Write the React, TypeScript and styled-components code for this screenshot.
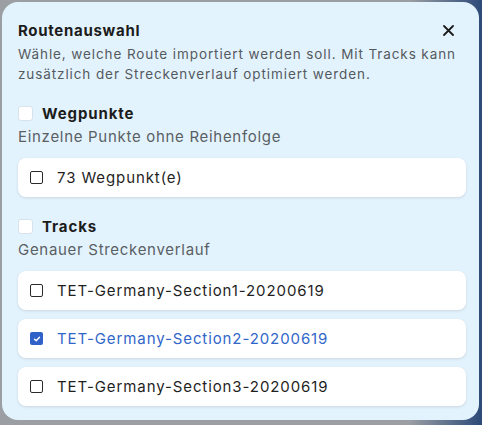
import React, { useState } from 'react';
import styled, { createGlobalStyle } from 'styled-components';

const GlobalStyle = createGlobalStyle`
  html, body {
    margin: 0;
    padding: 0;
    background: #9b9ea3;
    font-family: Inter, "Noto Sans", sans-serif;
  }
`;

const Backdrop = styled.div`
  width: 482px;
  height: 425px;
  box-sizing: border-box;
  padding: 2px 3px 5px 2px;
  background: linear-gradient(90deg, #9b9ea3 0%, #9b9ea3 85%, #2c4a78 100%);
`;

const Dialog = styled.div`
  height: 100%;
  box-sizing: border-box;
  background: #e3f3fd;
  border-radius: 16px;
  padding: 16px 13px 12px 16px;
  display: flex;
  flex-direction: column;
`;

const Header = styled.div`
  display: flex;
  align-items: center;
  justify-content: space-between;
  height: 24px;
`;

const Title = styled.h2`
  margin: 0;
  font-size: 15px;
  font-weight: 700;
  letter-spacing: 0.7px;
  color: #1c1c1c;
`;

const CloseButton = styled.button`
  border: none;
  background: none;
  padding: 0;
  width: 24px;
  height: 24px;
  display: flex;
  align-items: center;
  justify-content: center;
  margin-right: 6px;
  cursor: pointer;
`;

const Description = styled.p`
  margin: 2px 0 0 0;
  font-size: 13.5px;
  letter-spacing: 0.9px;
  line-height: 20px;
  color: #555a5f;
`;

const Section = styled.div`
  margin-top: 20px;
  display: flex;
  flex-direction: column;
`;

const SectionHead = styled.label`
  display: flex;
  align-items: center;
  gap: 9px;
  height: 18px;
  font-size: 15px;
  font-weight: 700;
  letter-spacing: 0.9px;
  color: #1c1c1c;
`;

const BigBox = styled.span`
  width: 15px;
  height: 15px;
  box-sizing: border-box;
  background: #fff;
  border: 1px solid #d8e2ea;
  border-radius: 3px;
`;

const SectionHint = styled.div`
  margin-top: 5px;
  font-size: 15px;
  letter-spacing: 0.7px;
  line-height: 20px;
  color: #5a5f64;
`;

const List = styled.div`
  margin-top: 11px;
  display: flex;
  flex-direction: column;
  gap: 9px;
`;

const Card = styled.div<{ $active?: boolean }>`
  height: 39px;
  box-sizing: border-box;
  background: #fff;
  border-radius: 8px;
  box-shadow: 0 1px 3px rgba(0, 0, 0, 0.12);
  display: flex;
  align-items: center;
  gap: 14px;
  padding-left: 12px;
  font-size: 15px;
  letter-spacing: 0.9px;
  color: ${(p) => (p.$active ? '#3166c9' : '#1f1f1f')};
  cursor: pointer;
`;

const SmallBox = styled.span<{ $checked?: boolean }>`
  width: 13px;
  height: 13px;
  box-sizing: border-box;
  border-radius: 2px;
  border: ${(p) => (p.$checked ? 'none' : '1.5px solid #2a2a2a')};
  background: ${(p) => (p.$checked ? '#2f61c8' : '#fff')};
  display: flex;
  align-items: center;
  justify-content: center;
`;

const tracks = [
  'TET-Germany-Section1-20200619',
  'TET-Germany-Section2-20200619',
  'TET-Germany-Section3-20200619',
];

const Check = () => (
  <svg width="8" height="8" viewBox="0 0 8 8">
    <path d="M1.5 4.2 L3.2 5.8 L6.5 2.2" stroke="#fff" strokeWidth="1.4" fill="none" strokeLinecap="round" strokeLinejoin="round" />
  </svg>
);

const App = () => {
  const [selected, setSelected] = useState<string[]>([tracks[1]]);

  const toggle = (name: string) =>
    setSelected((s) => (s.includes(name) ? s.filter((x) => x !== name) : [...s, name]));

  return (
    <>
      <GlobalStyle />
      <Backdrop>
        <Dialog>
          <Header>
            <Title>Routenauswahl</Title>
            <CloseButton aria-label="Schließen">
              <svg width="11" height="11" viewBox="0 0 11 11">
                <path d="M1 1 L10 10 M10 1 L1 10" stroke="#1c1c1c" strokeWidth="1.8" strokeLinecap="round" />
              </svg>
            </CloseButton>
          </Header>
          <Description>
            Wähle, welche Route importiert werden soll. Mit Tracks kann zusätzlich der Streckenverlauf optimiert werden.
          </Description>

          <Section>
            <SectionHead>
              <BigBox />
              Wegpunkte
            </SectionHead>
            <SectionHint>Einzelne Punkte ohne Reihenfolge</SectionHint>
            <List>
              <Card onClick={() => toggle('wp')} $active={selected.includes('wp')}>
                <SmallBox $checked={selected.includes('wp')}>{selected.includes('wp') && <Check />}</SmallBox>
                73 Wegpunkt(e)
              </Card>
            </List>
          </Section>

          <Section>
            <SectionHead>
              <BigBox />
              Tracks
            </SectionHead>
            <SectionHint>Genauer Streckenverlauf</SectionHint>
            <List>
              {tracks.map((t) => {
                const on = selected.includes(t);
                return (
                  <Card key={t} $active={on} onClick={() => toggle(t)}>
                    <SmallBox $checked={on}>{on && <Check />}</SmallBox>
                    {t}
                  </Card>
                );
              })}
            </List>
          </Section>
        </Dialog>
      </Backdrop>
    </>
  );
};

export default App;
